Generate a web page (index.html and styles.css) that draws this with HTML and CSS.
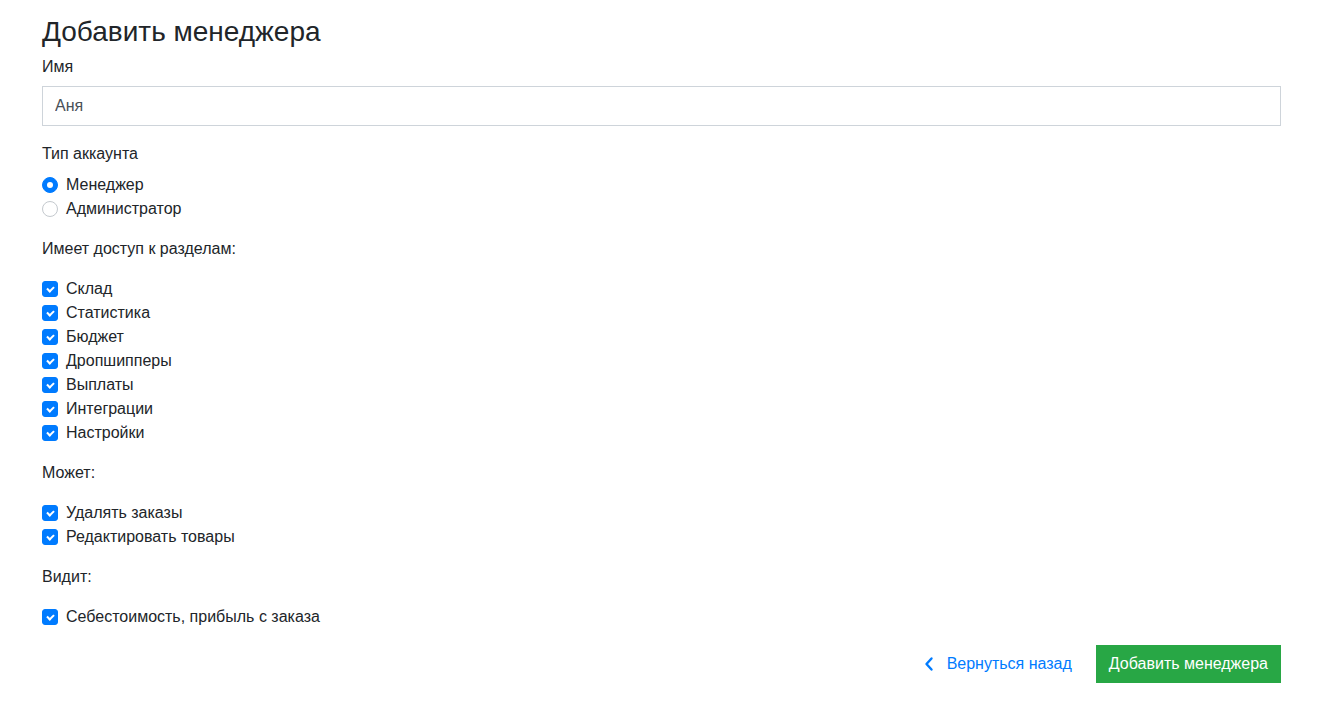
FILE: index.html
```html
<!DOCTYPE html>
<html lang="ru">
<head>
<meta charset="utf-8">
<title>Добавить менеджера</title>
<link rel="stylesheet" href="styles.css">
</head>
<body>
<main class="page">
  <h3 class="page-title">Добавить менеджера</h3>
  <form class="form">
    <div class="form-group">
      <label class="field-label" for="name">Имя</label>
      <input class="text-input" id="name" type="text" value="Аня">
    </div>

    <div class="form-group">
      <div class="field-label">Тип аккаунта</div>
      <label class="choice">
        <input type="radio" name="role" checked>
        <span class="mark mark-radio"></span>
        <span>Менеджер</span>
      </label>
      <label class="choice">
        <input type="radio" name="role">
        <span class="mark mark-radio"></span>
        <span>Администратор</span>
      </label>
    </div>

    <div class="form-group">
      <div class="section-label">Имеет доступ к разделам:</div>
      <label class="choice"><input type="checkbox" checked><span class="mark mark-check"></span><span>Склад</span></label>
      <label class="choice"><input type="checkbox" checked><span class="mark mark-check"></span><span>Статистика</span></label>
      <label class="choice"><input type="checkbox" checked><span class="mark mark-check"></span><span>Бюджет</span></label>
      <label class="choice"><input type="checkbox" checked><span class="mark mark-check"></span><span>Дропшипперы</span></label>
      <label class="choice"><input type="checkbox" checked><span class="mark mark-check"></span><span>Выплаты</span></label>
      <label class="choice"><input type="checkbox" checked><span class="mark mark-check"></span><span>Интеграции</span></label>
      <label class="choice"><input type="checkbox" checked><span class="mark mark-check"></span><span>Настройки</span></label>
    </div>

    <div class="form-group">
      <div class="section-label">Может:</div>
      <label class="choice"><input type="checkbox" checked><span class="mark mark-check"></span><span>Удалять заказы</span></label>
      <label class="choice"><input type="checkbox" checked><span class="mark mark-check"></span><span>Редактировать товары</span></label>
    </div>

    <div class="form-group">
      <div class="section-label">Видит:</div>
      <label class="choice"><input type="checkbox" checked><span class="mark mark-check"></span><span>Себестоимость, прибыль с заказа</span></label>
    </div>

    <div class="actions">
      <a class="back-link" href="#">
        <svg class="back-icon" viewBox="0 0 10 16" width="10" height="16" aria-hidden="true">
          <path d="M7.5 2.5 L2.5 8 L7.5 13.5" fill="none" stroke="currentColor" stroke-width="2.4" stroke-linecap="round" stroke-linejoin="round"/>
        </svg>
        <span>Вернуться назад</span>
      </a>
      <button class="btn-submit" type="button">Добавить менеджера</button>
    </div>
  </form>
</main>
</body>
</html>
```

FILE: styles.css
```css
* {
  box-sizing: border-box;
}

html, body {
  margin: 0;
  background: #fff;
}

body {
  font-family: "Liberation Sans", Arial, sans-serif;
  font-size: 16px;
  line-height: 24px;
  color: #212529;
}

.page {
  padding: 15px 36px 20px 42px;
}

.page-title {
  margin: 0 0 6px;
  font-size: 28px;
  font-weight: 400;
  line-height: 1.2;
  color: #212529;
}

.form-group {
  margin-bottom: 16px;
}

.field-label {
  display: block;
  margin-bottom: 7px;
}

.section-label {
  margin-bottom: 16px;
}

.text-input {
  display: block;
  width: 100%;
  height: 40px;
  padding: 0 12px;
  border: 1px solid #ced4da;
  border-radius: 0;
  font: inherit;
  color: #495057;
  background: #fff;
  outline: none;
}

.choice {
  position: relative;
  display: flex;
  align-items: center;
  gap: 8px;
  height: 24px;
  cursor: pointer;
}

.choice input {
  position: absolute;
  opacity: 0;
  width: 0;
  height: 0;
  margin: 0;
}

.mark {
  position: relative;
  flex: none;
  width: 16px;
  height: 16px;
  border: 1px solid #adb5bd;
  background: #fff;
}

.mark-radio {
  border-radius: 50%;
  border-color: #c4c9ce;
}

.mark-check {
  border-radius: 3px;
}

.choice input:checked + .mark {
  background: #007bff;
  border-color: #007bff;
}

.choice input:checked + .mark-radio::after {
  content: "";
  position: absolute;
  left: 4px;
  top: 4px;
  width: 6px;
  height: 6px;
  border-radius: 50%;
  background: #fff;
}

/* small white tick inside a checked box */
.choice input:checked + .mark-check::after {
  content: "";
  position: absolute;
  left: 4px;
  top: 4px;
  width: 5px;
  height: 3px;
  border-left: 2px solid #fff;
  border-bottom: 2px solid #fff;
  transform: rotate(-45deg);
  transform-origin: center;
}

.actions {
  display: flex;
  justify-content: flex-end;
  align-items: center;
  gap: 24px;
  margin-top: 16px;
}

.back-link {
  display: flex;
  align-items: center;
  gap: 13px;
  color: #007bff;
  text-decoration: none;
}

.back-icon {
  display: block;
}

.btn-submit {
  height: 38px;
  padding: 0 12px;
  border: 1px solid #28a745;
  border-radius: 0;
  background: #28a745;
  color: #fff;
  font: inherit;
  cursor: pointer;
}
```
